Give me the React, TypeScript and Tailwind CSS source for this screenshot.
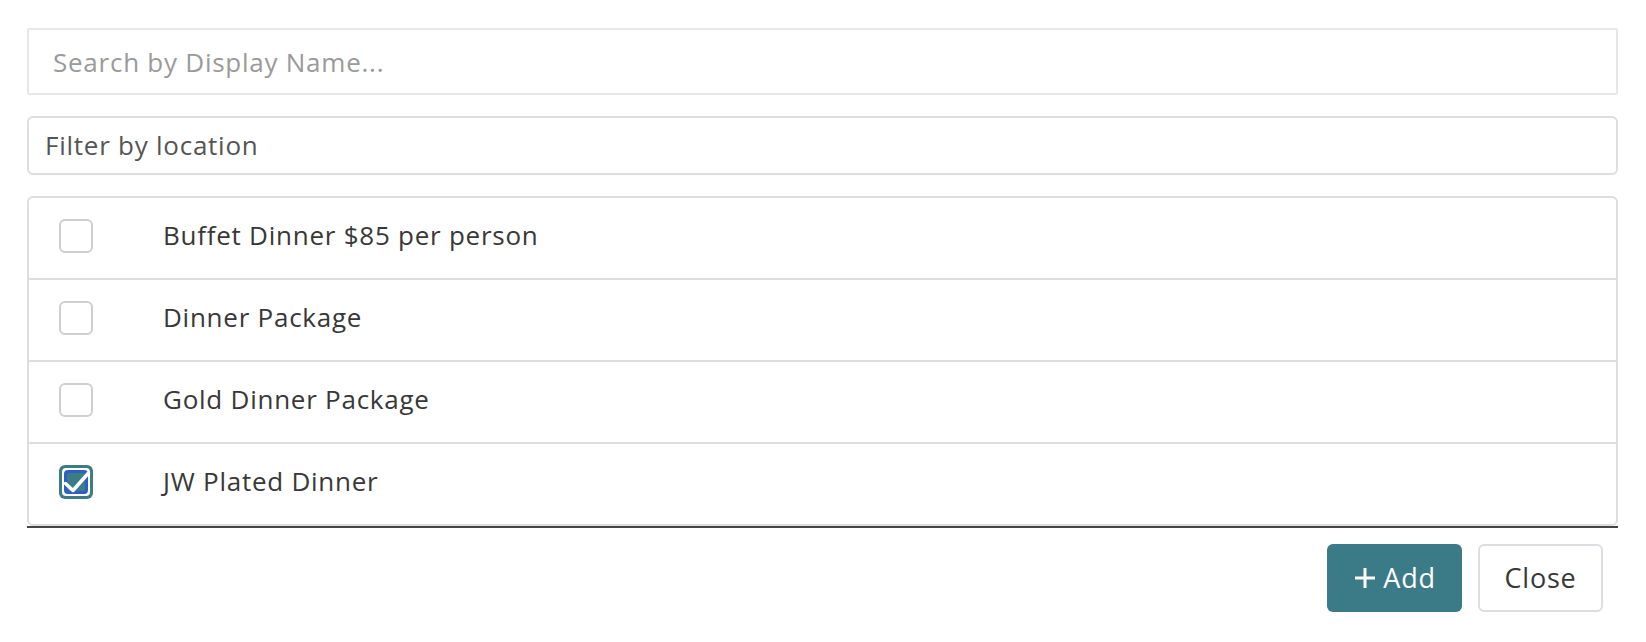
import { useState } from 'react';

const items = [
  { id: 1, name: 'Buffet Dinner $85 per person', checked: false },
  { id: 2, name: 'Dinner Package', checked: false },
  { id: 3, name: 'Gold Dinner Package', checked: false },
  { id: 4, name: 'JW Plated Dinner', checked: true },
];

function CheckedBox() {
  return (
    <svg width="34" height="34" viewBox="0 0 34 34">
      <rect x="0" y="0" width="34" height="34" rx="6" fill="#3b7c87" />
      <rect x="3" y="3" width="28" height="28" rx="4" fill="#ffffff" />
      <rect x="5" y="5" width="24" height="24" rx="4" fill="#2c5ec6" />
      <rect x="8" y="8" width="18" height="18" rx="2" fill="#3b7c87" />
      <path d="M6.5 18.5 L14 25.5 L29.5 8" fill="none" stroke="#ffffff" strokeWidth="3.5" strokeLinecap="round" strokeLinejoin="round" />
    </svg>
  );
}

export default function App() {
  const [rows, setRows] = useState(items);

  const toggle = (id: number) =>
    setRows(rows.map((r) => (r.id === id ? { ...r, checked: !r.checked } : r)));

  return (
    <div className="min-h-screen bg-white pl-[27px] pr-[28px] pt-[28px] font-['Open_Sans',sans-serif] font-medium tracking-[0.75px] text-[#383838]">
      {/* Search */}
      <input
        className="block h-[67px] w-full rounded-[2px] border-2 border-[#e7e7e7] pl-[24px] text-[26px] outline-none placeholder:text-[#9a9a9a]"
        placeholder="Search by Display Name..."
      />

      {/* Location filter */}
      <div className="mt-[21px] flex h-[59px] items-center rounded-[6px] border-2 border-[#dddde2] pl-[16px] text-[26px] text-[#555555]">
        Filter by location
      </div>

      {/* Item list */}
      <div className="mt-[21px] rounded-[6px] border-2 border-[#dddde2]">
        {rows.map((row, i) => (
          <div
            key={row.id}
            onClick={() => toggle(row.id)}
            className={`flex items-center pb-[5px] pl-[30px] ${i < rows.length - 1 ? 'h-[82px] border-b-2 border-[#dddde2]' : 'h-[80px]'}`}
          >
            {row.checked ? (
              <CheckedBox />
            ) : (
              <div className="h-[34px] w-[34px] rounded-[6px] border-2 border-[#cfcfcf] bg-white"></div>
            )}
            <span className="ml-[70px] text-[26px]">{row.name}</span>
          </div>
        ))}
      </div>
      <div className="h-[2px] bg-[#444444]"></div>

      {/* Actions */}
      <div className="mt-[16px] flex justify-end gap-[16px] pr-[15px]">
        <button className="flex h-[68px] w-[135px] items-center justify-center gap-[6px] rounded-[6px] bg-[#3a7b87] text-[27px] text-white">
          <svg width="24" height="24" viewBox="0 0 24 24">
            <path d="M12 2 V22 M2 12 H22" stroke="#ffffff" strokeWidth="3" />
          </svg>
          Add
        </button>
        <button className="h-[68px] w-[125px] rounded-[6px] border-2 border-[#dddde2] bg-white text-[27px] text-[#383838]">
          Close
        </button>
      </div>
    </div>
  );
}
